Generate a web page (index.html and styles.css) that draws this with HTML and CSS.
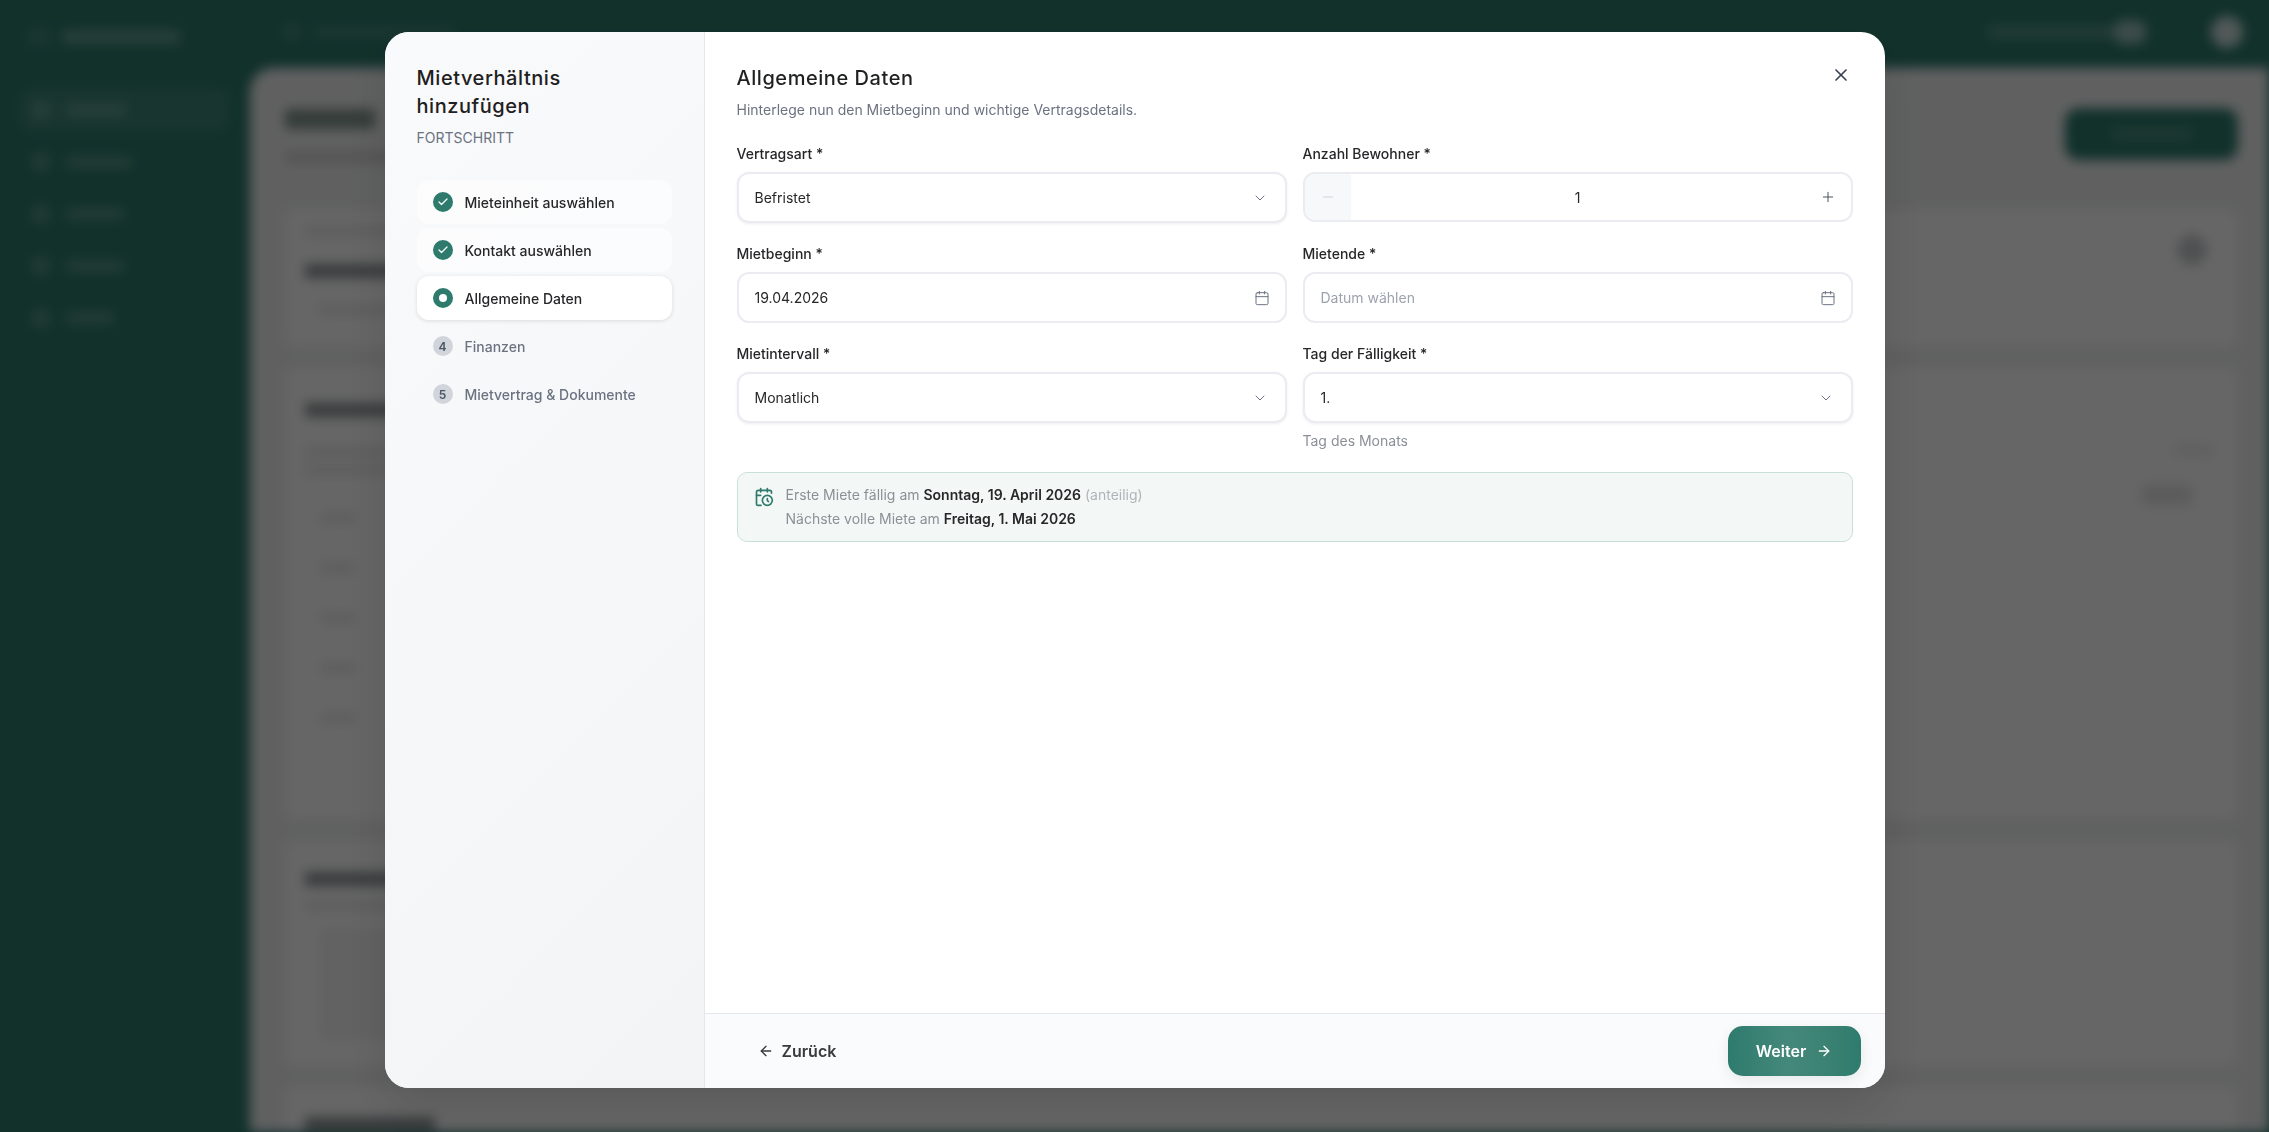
FILE: index.html
```html
<!DOCTYPE html>
<html lang="de">
<head>
  <meta charset="UTF-8">
  <title>Mietverhältnis hinzufügen</title>
  <link rel="stylesheet" href="styles.css">
</head>
<body>

<!-- app behind the dialog, blurred so only shapes are left -->
<div class="app" aria-hidden="true">
  <div class="app-side">
    <div class="logo"><i class="logo-mark"></i><i class="bar bar-logo"></i></div>
    <div class="nav-row nav-active"><i class="dot"></i><i class="bar w60"></i></div>
    <div class="nav-row"><i class="dot"></i><i class="bar w66"></i></div>
    <div class="nav-row"><i class="dot"></i><i class="bar w58"></i></div>
    <div class="nav-row"><i class="dot"></i><i class="bar w58"></i></div>
    <div class="nav-row"><i class="dot"></i><i class="bar w48"></i></div>
  </div>
  <div class="app-main">
    <div class="topbar">
      <div class="top-search"><i class="dot"></i><i class="bar w140"></i></div>
      <div class="top-user"><i class="bar w126"></i><i class="pill"></i><i class="avatar"></i></div>
    </div>
    <div class="panel">
      <div class="panel-head">
        <div>
          <div class="ghost-title"></div>
          <div class="ghost-sub"></div>
        </div>
        <div class="ghost-btn"><i class="bar w80"></i></div>
      </div>
      <div class="card card-one">
        <div class="ghost-line"></div>
        <div class="ghost-strong"></div>
        <div class="ghost-line short"></div>
        <i class="ghost-round"></i>
      </div>
      <div class="card card-two">
        <div class="ghost-strong"></div>
        <div class="ghost-line"></div>
        <div class="ghost-line"></div>
        <div class="ghost-rows">
          <i></i><i></i><i></i><i></i><i></i>
        </div>
        <i class="ghost-tag"></i>
        <i class="ghost-chip"></i>
      </div>
      <div class="card card-three">
        <div class="ghost-strong"></div>
        <div class="ghost-line"></div>
        <div class="ghost-box"></div>
      </div>
      <div class="card card-four">
        <div class="ghost-strong"></div>
      </div>
    </div>
  </div>
</div>

<div class="overlay">
  <div class="modal">

    <div class="modal-side">
      <h2 class="side-title">Mietverhältnis hinzufügen</h2>
      <div class="side-label">FORTSCHRITT</div>
      <div class="steps">
        <div class="step step-done">
          <span class="step-icon">
            <svg viewBox="0 0 24 24" width="12" height="12"><path d="M20 6 9 17l-5-5"/></svg>
          </span>
          Mieteinheit auswählen
        </div>
        <div class="step step-done">
          <span class="step-icon">
            <svg viewBox="0 0 24 24" width="12" height="12"><path d="M20 6 9 17l-5-5"/></svg>
          </span>
          Kontakt auswählen
        </div>
        <div class="step step-active">
          <span class="step-icon"><i class="step-dot"></i></span>
          Allgemeine Daten
        </div>
        <div class="step">
          <span class="step-icon">4</span>
          Finanzen
        </div>
        <div class="step">
          <span class="step-icon">5</span>
          Mietvertrag &amp; Dokumente
        </div>
      </div>
    </div>

    <div class="modal-main">
      <div class="modal-body">
        <button class="close-btn" type="button" aria-label="Schließen">
          <svg class="icon" viewBox="0 0 24 24" width="20" height="20"><path d="M18 6 6 18"/><path d="m6 6 12 12"/></svg>
        </button>
        <h2 class="main-title">Allgemeine Daten</h2>
        <p class="main-sub">Hinterlege nun den Mietbeginn und wichtige Vertragsdetails.</p>

        <div class="form-grid">
          <div class="field">
            <label>Vertragsart *</label>
            <div class="input input-select">
              Befristet
              <svg class="icon" viewBox="0 0 24 24" width="16" height="16"><path d="m6 9 6 6 6-6"/></svg>
            </div>
          </div>
          <div class="field">
            <label>Anzahl Bewohner *</label>
            <div class="stepper">
              <span class="stepper-btn stepper-off">
                <svg class="icon" viewBox="0 0 24 24" width="16" height="16"><path d="M5 12h14"/></svg>
              </span>
              <span class="stepper-value">1</span>
              <span class="stepper-btn">
                <svg class="icon" viewBox="0 0 24 24" width="16" height="16"><path d="M5 12h14"/><path d="M12 5v14"/></svg>
              </span>
            </div>
          </div>
          <div class="field">
            <label>Mietbeginn *</label>
            <div class="input">
              19.04.2026
              <svg class="icon" viewBox="0 0 24 24" width="16" height="16"><path d="M8 2v4"/><path d="M16 2v4"/><rect x="3" y="4" width="18" height="18" rx="2"/><path d="M3 10h18"/></svg>
            </div>
          </div>
          <div class="field">
            <label>Mietende *</label>
            <div class="input input-empty">
              Datum wählen
              <svg class="icon" viewBox="0 0 24 24" width="16" height="16"><path d="M8 2v4"/><path d="M16 2v4"/><rect x="3" y="4" width="18" height="18" rx="2"/><path d="M3 10h18"/></svg>
            </div>
          </div>
          <div class="field">
            <label>Mietintervall *</label>
            <div class="input input-select">
              Monatlich
              <svg class="icon" viewBox="0 0 24 24" width="16" height="16"><path d="m6 9 6 6 6-6"/></svg>
            </div>
          </div>
          <div class="field">
            <label>Tag der Fälligkeit *</label>
            <div class="input input-select">
              1.
              <svg class="icon" viewBox="0 0 24 24" width="16" height="16"><path d="m6 9 6 6 6-6"/></svg>
            </div>
            <div class="hint">Tag des Monats</div>
          </div>
        </div>

        <div class="info-box">
          <svg class="info-icon" viewBox="0 0 24 24" width="20" height="20"><path d="M21 7.5V6a2 2 0 0 0-2-2H5a2 2 0 0 0-2 2v14a2 2 0 0 0 2 2h3.5"/><path d="M16 2v4"/><path d="M8 2v4"/><path d="M3 10h5"/><path d="M17.5 17.5 16 16.3V14"/><circle cx="16" cy="16" r="6"/></svg>
          <div class="info-text">
            <div>Erste Miete fällig am <b>Sonntag, 19. April 2026</b> <span class="info-soft">(anteilig)</span></div>
            <div>Nächste volle Miete am <b>Freitag, 1. Mai 2026</b></div>
          </div>
        </div>
      </div>

      <div class="modal-foot">
        <button class="btn-back" type="button">
          <svg class="icon" viewBox="0 0 24 24" width="16" height="16"><path d="m12 19-7-7 7-7"/><path d="M19 12H5"/></svg>
          Zurück
        </button>
        <button class="btn-next" type="button">
          Weiter
          <svg class="icon" viewBox="0 0 24 24" width="16" height="16"><path d="M5 12h14"/><path d="m12 5 7 7-7 7"/></svg>
        </button>
      </div>
    </div>

  </div>
</div>

</body>
</html>
```

FILE: styles.css
```css
* {
  box-sizing: border-box;
  margin: 0;
  padding: 0;
}
html, body {
  height: 100%;
  overflow: hidden;
}
body {
  font-family: Inter, "Liberation Sans", sans-serif;
  font-size: 14px;
  color: #1f2937;
  background: #2e7b6d;
}
i {
  display: block;
}
.icon {
  fill: none;
  stroke: currentColor;
  stroke-width: 2;
  stroke-linecap: round;
  stroke-linejoin: round;
  flex-shrink: 0;
}

/* blurred app in the background */
.app {
  display: flex;
  height: 100vh;
  filter: blur(6px);
  background: #2e7b6d;
}
.app-side {
  width: 250px;
  flex-shrink: 0;
  padding: 28px 20px 0;
}
.logo {
  display: flex;
  align-items: center;
  gap: 12px;
  padding-left: 8px;
  margin-bottom: 42px;
}
.logo-mark {
  width: 22px;
  height: 18px;
  background: rgba(255,255,255,0.1);
}
.bar {
  height: 12px;
  background: rgba(255,255,255,0.2);
}
.bar-logo { width: 118px; height: 14px; background: rgba(255,255,255,0.26); }
.w48 { width: 48px; }
.w58 { width: 58px; }
.w60 { width: 60px; }
.w66 { width: 66px; }
.w80 { width: 80px; }
.w126 { width: 126px; }
.w140 { width: 140px; }
.nav-row {
  display: flex;
  align-items: center;
  gap: 16px;
  height: 44px;
  padding-left: 12px;
  margin-bottom: 8px;
  border-radius: 10px;
}
.nav-active {
  background: rgba(255,255,255,0.08);
}
.dot {
  width: 18px;
  height: 18px;
  border-radius: 4px;
  background: rgba(255,255,255,0.18);
}
.app-main {
  flex: 1;
  display: flex;
  flex-direction: column;
  min-width: 0;
}
.topbar {
  height: 68px;
  flex-shrink: 0;
  display: flex;
  justify-content: space-between;
  align-items: center;
  padding: 0 26px 4px 33px;
}
.top-search, .top-user {
  display: flex;
  align-items: center;
  gap: 14px;
}
.top-search {
  opacity: 0.55;
}
.top-user {
  gap: 0;
}
.pill {
  width: 34px;
  height: 24px;
  border-radius: 12px;
  background: rgba(255,255,255,0.5);
}
.avatar {
  width: 32px;
  height: 32px;
  margin-left: 64px;
  border-radius: 50%;
  background: rgba(255,255,255,0.75);
}
.panel {
  flex: 1;
  min-height: 0;
  background: #f0f1f1;
  border-radius: 24px 0 0 0;
  padding: 40px 31px 0 35px;
  overflow: hidden;
}
.panel-head {
  display: flex;
  justify-content: space-between;
  align-items: flex-start;
  margin-bottom: 46px;
}
.ghost-title {
  width: 90px;
  height: 20px;
  margin-top: 1px;
  background: rgba(20,60,50,0.5);
}
.ghost-sub {
  width: 150px;
  height: 12px;
  margin-top: 22px;
  background: rgba(60,40,40,0.14);
}
.ghost-btn {
  width: 173px;
  height: 52px;
  display: flex;
  align-items: center;
  justify-content: center;
  border-radius: 14px;
  background: #2e7b6d;
}
.ghost-btn .bar {
  background: rgba(255,255,255,0.15);
}
.card {
  position: relative;
  background: #fff;
  margin-bottom: 20px;
  padding: 14px 20px;
  border-radius: 12px;
  overflow: hidden;
}
.card-one { height: 138px; padding-top: 17px; }
.card-two { height: 453px; padding-top: 36px; }
.card-three { height: 226px; padding-top: 32px; }
.card-four { height: 100px; padding-top: 31px; }
.ghost-line {
  width: 300px;
  height: 10px;
  margin-bottom: 18px;
  background: rgba(60,40,40,0.1);
}
.ghost-line.short {
  width: 160px;
  margin-left: 14px;
}
.ghost-strong {
  width: 300px;
  height: 14px;
  margin-bottom: 18px;
  background: rgba(30,40,45,0.5);
}
.card-one .ghost-line { margin-bottom: 28px; }
.card-one .ghost-strong { margin-bottom: 27px; }
.card-two .ghost-strong { margin-bottom: 30px; }
.card-two .ghost-line { margin-bottom: 8px; }
.card-three .ghost-strong { margin-bottom: 15px; }
.card-four .ghost-strong { width: 130px; }
.ghost-round {
  position: absolute;
  top: 26px;
  right: 31px;
  width: 30px;
  height: 30px;
  border-radius: 50%;
  background: rgba(30,40,50,0.25);
}
.ghost-rows {
  margin-top: 38px;
}
.ghost-rows i {
  width: 35px;
  height: 10px;
  margin: 0 0 40px 16px;
  background: rgba(60,40,40,0.1);
}
.ghost-tag {
  position: absolute;
  top: 77px;
  right: 24px;
  width: 40px;
  height: 12px;
  background: rgba(0,0,0,0.06);
}
.ghost-chip {
  position: absolute;
  top: 118px;
  right: 46px;
  width: 50px;
  height: 20px;
  background: rgba(0,0,0,0.1);
}
.ghost-box {
  width: 400px;
  height: 110px;
  margin-left: 16px;
  background: rgba(60,70,90,0.06);
}

/* dialog */
.overlay {
  position: fixed;
  top: 0; left: 0; right: 0; bottom: 0;
  background: rgba(0,0,0,0.6);
  display: flex;
  justify-content: center;
  align-items: flex-start;
  padding-top: 32px;
}
.modal {
  width: 1500px;
  height: 1056px;
  display: flex;
  background: #fff;
  border-radius: 24px;
  overflow: hidden;
  box-shadow: 0 20px 50px rgba(0,0,0,0.12);
}
.modal-side {
  width: 320px;
  flex-shrink: 0;
  padding: 32px;
  background: linear-gradient(135deg, #f9fafc, #f3f4f6);
  border-right: 1px solid #e5e7eb;
}
.side-title, .main-title {
  font-size: 20px;
  line-height: 28px;
  font-weight: 500;
  letter-spacing: 0.55px;
  color: #1f2020;
}
.side-label {
  margin-top: 8px;
  font-size: 14px;
  line-height: 20px;
  color: #6b7280;
}
.steps {
  margin-top: 32px;
  display: flex;
  flex-direction: column;
  gap: 4px;
}
.step {
  display: flex;
  align-items: center;
  gap: 12px;
  height: 44px;
  padding-left: 16px;
  border-radius: 12px;
  font-size: 14px;
  font-weight: 500;
  color: #6b7280;
}
.step-done {
  color: #27272a;
  background: rgba(255,255,255,0.55);
}
.step-active {
  color: #27272a;
  background: #fff;
  box-shadow: 0 1px 4px rgba(0,0,0,0.12);
}
.step-icon {
  width: 20px;
  height: 20px;
  border-radius: 50%;
  display: flex;
  align-items: center;
  justify-content: center;
  font-size: 12px;
  font-weight: 600;
  color: #4b5563;
  background: #d1d5db;
  flex-shrink: 0;
}
.step-done .step-icon, .step-active .step-icon {
  background: #2e7b6d;
}
.step-icon svg {
  fill: none;
  stroke: #fff;
  stroke-width: 2.5;
  stroke-linecap: round;
  stroke-linejoin: round;
}
.step-dot {
  width: 8px;
  height: 8px;
  border-radius: 50%;
  background: #fff;
}
.modal-main {
  flex: 1;
  display: flex;
  flex-direction: column;
  min-width: 0;
}
.modal-body {
  flex: 1;
  position: relative;
  padding: 32px 32px 0;
}
.close-btn {
  position: absolute;
  top: 33px;
  right: 34px;
  width: 20px;
  height: 20px;
  border: none;
  background: none;
  color: #374151;
}
.main-sub {
  margin-top: 8px;
  font-size: 14px;
  line-height: 20px;
  color: #6b7280;
}
.form-grid {
  margin-top: 24px;
  display: grid;
  grid-template-columns: 1fr 1fr;
  column-gap: 16px;
  row-gap: 21px;
}
.field label {
  display: block;
  font-size: 14px;
  line-height: 20px;
  font-weight: 500;
  color: #27272a;
  margin-bottom: 8px;
}
.input {
  height: 51px;
  display: flex;
  align-items: center;
  justify-content: space-between;
  padding: 0 16px;
  background: #fff;
  border: 2px solid #ebecf1;
  border-radius: 12px;
  color: #27272a;
}
.input .icon {
  color: #6b7280;
  stroke-width: 1.5;
  margin-right: -1px;
}
.input-select {
  box-shadow: 0 1px 3px rgba(0,0,0,0.07);
}
.input-select .icon {
  margin-right: 1px;
}
.input-empty {
  color: #9ca3af;
}
.stepper {
  height: 50px;
  display: flex;
  align-items: center;
  border: 2px solid #ebecf1;
  border-radius: 12px;
  overflow: hidden;
}
.stepper-btn {
  width: 46px;
  height: 100%;
  display: flex;
  align-items: center;
  justify-content: center;
  color: #4b5563;
}
.stepper-btn .icon {
  stroke-width: 1.5;
}
.stepper-off {
  background: #f7f8fa;
  color: #d1d5db;
}
.stepper-value {
  flex: 1;
  text-align: center;
  color: #27272a;
}
.hint {
  margin-top: 9px;
  font-size: 14px;
  line-height: 18px;
  color: #8b8f96;
}
.info-box {
  margin-top: 22px;
  display: flex;
  gap: 12px;
  padding: 10px 16px;
  background: #f3f8f6;
  border: 1px solid #c9e0d9;
  border-radius: 10px;
}
.info-icon {
  fill: none;
  stroke: #2e7b6d;
  stroke-width: 2;
  stroke-linecap: round;
  stroke-linejoin: round;
  flex-shrink: 0;
  margin-top: 4px;
}
.info-text {
  font-size: 14px;
  line-height: 24px;
  color: #8b8f96;
}
.info-text b {
  font-weight: 600;
  color: #27272a;
}
.info-soft {
  color: #b0b4ba;
}
.modal-foot {
  height: 75px;
  flex-shrink: 0;
  display: flex;
  justify-content: space-between;
  align-items: center;
  padding: 0 24px 0 32px;
  background: #fafbfd;
  border-top: 1px solid #e5e7eb;
}
.btn-back, .btn-next {
  display: flex;
  align-items: center;
  font-family: inherit;
  font-size: 16px;
  font-weight: 600;
  border: none;
}
.btn-back {
  gap: 8px;
  margin-left: 21px;
  background: none;
  color: #3a3a3c;
}
.btn-next {
  width: 133px;
  height: 50px;
  justify-content: center;
  gap: 10px;
  color: #fff;
  border-radius: 15px;
  background: linear-gradient(90deg, #2e7b6d, #44887b 45%, #3d8374 70%, #2e7b6d);
  box-shadow: 0 4px 14px rgba(0,0,0,0.08);
}
```
